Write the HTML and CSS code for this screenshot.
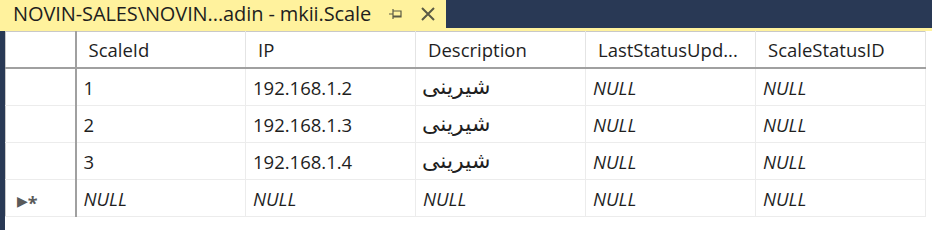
FILE: index.html
```html
<!DOCTYPE html>
<html>
<head>
<meta charset="utf-8">
<link rel="stylesheet" href="styles.css">
</head>
<body>
<div class="window">
  <div class="tabbar">
    <div class="tab">
      <span class="tab-title">NOVIN-SALES\NOVIN...adin - mkii.Scale</span>
      <svg class="pin" width="16" height="12" viewBox="0 0 16 12">
        <path d="M1 6H5M5 1V11M5 3H13V9H5M5 8H13" fill="none" stroke="#5b5a45" stroke-width="1.2"/>
      </svg>
      <svg class="close" width="16" height="16" viewBox="0 0 16 16">
        <path d="M2 2L14 14M14 2L2 14" fill="none" stroke="#5b5a45" stroke-width="2"/>
      </svg>
    </div>
  </div>
  <div class="tabline"></div>
  <div class="body">
    <div class="strip"></div>
    <div class="gridwrap">
      <table class="grid">
        <colgroup>
          <col class="c-rh"><col class="c-d"><col class="c-d"><col class="c-d"><col class="c-d"><col class="c-d">
        </colgroup>
        <thead>
          <tr>
            <th class="rh"></th>
            <th>ScaleId</th>
            <th>IP</th>
            <th>Description</th>
            <th>LastStatusUpd...</th>
            <th>ScaleStatusID</th>
          </tr>
        </thead>
        <tbody>
          <tr>
            <td class="rh"></td>
            <td>1</td>
            <td>192.168.1.2</td>
            <td class="fa">شیرینی</td>
            <td class="null">NULL</td>
            <td class="null">NULL</td>
          </tr>
          <tr>
            <td class="rh"></td>
            <td>2</td>
            <td>192.168.1.3</td>
            <td class="fa">شیرینی</td>
            <td class="null">NULL</td>
            <td class="null">NULL</td>
          </tr>
          <tr>
            <td class="rh"></td>
            <td>3</td>
            <td>192.168.1.4</td>
            <td class="fa">شیرینی</td>
            <td class="null">NULL</td>
            <td class="null">NULL</td>
          </tr>
          <tr>
            <td class="rh"><span class="newrow"><span class="arrow">&#9654;</span><span class="star">*</span></span></td>
            <td class="null">NULL</td>
            <td class="null">NULL</td>
            <td class="null">NULL</td>
            <td class="null">NULL</td>
            <td class="null">NULL</td>
          </tr>
        </tbody>
      </table>
    </div>
  </div>
</div>
</body>
</html>
```
FILE: styles.css
```css
html, body {
  margin: 0;
  padding: 0;
  background: #ffffff;
}
.window {
  width: 932px;
  height: 230px;
  display: flex;
  flex-direction: column;
  font-family: "Open Sans", "DejaVu Sans", sans-serif;
  color: #1e1e1e;
  overflow: hidden;
}
.tabbar {
  height: 28px;
  background: #293955;
  display: flex;
}
.tab {
  width: 446px;
  height: 28px;
  background: #fff29d;
  display: flex;
  align-items: center;
  box-sizing: border-box;
  padding-left: 13px;
}
.tab-title {
  font-size: 20px;
  line-height: 28px;
  color: #1e1e1e;
  white-space: nowrap;
  letter-spacing: -0.1px;
}
.pin {
  margin-left: 17px;
}
.close {
  margin-left: 16px;
}
.tabline {
  height: 3px;
  background: #fff29d;
}
.body {
  flex: 1;
  display: flex;
}
.strip {
  width: 5px;
  background: #293955;
}
.gridwrap {
  flex: 1;
  background: #ffffff;
}
.grid {
  border-collapse: collapse;
  table-layout: fixed;
  width: 920px;
  border-left: 1px solid #c8c8c8;
  border-top: 1px solid #c8c8c8;
  font-size: 18.5px;
}
.c-rh { width: 70px; }
.c-d { width: 170px; }
.grid th {
  height: 35px;
  font-weight: normal;
  text-align: left;
  padding: 0 0 0 12px;
  border-right: 1px solid #e4e4e4;
  border-bottom: 2px solid #a0a0a0;
  white-space: nowrap;
  overflow: hidden;
  color: #1e1e1e;
}
.grid td {
  height: 36px;
  padding: 0 0 0 7px;
  border-right: 1px solid #ececec;
  border-bottom: 1px solid #ececec;
  white-space: nowrap;
  overflow: hidden;
  color: #1e1e1e;
}
.grid .rh {
  border-right: 2px solid #a0a0a0;
  padding: 0;
}
.grid td.rh {
  border-bottom: 1px solid #ececec;
}
.grid td.fa {
  font-family: "DejaVu Sans", sans-serif;
  font-size: 22px;
  line-height: 30px;
  padding-left: 6px;
}
.grid .null {
  font-style: italic;
}
.newrow {
  display: inline-flex;
  align-items: center;
  margin-left: 11px;
  color: #5a5a5a;
}
.arrow {
  font-size: 14px;
}
.star {
  font-size: 18px;
  font-weight: bold;
  line-height: 10px;
  margin-top: 6px;
  margin-left: 0;
}
```
